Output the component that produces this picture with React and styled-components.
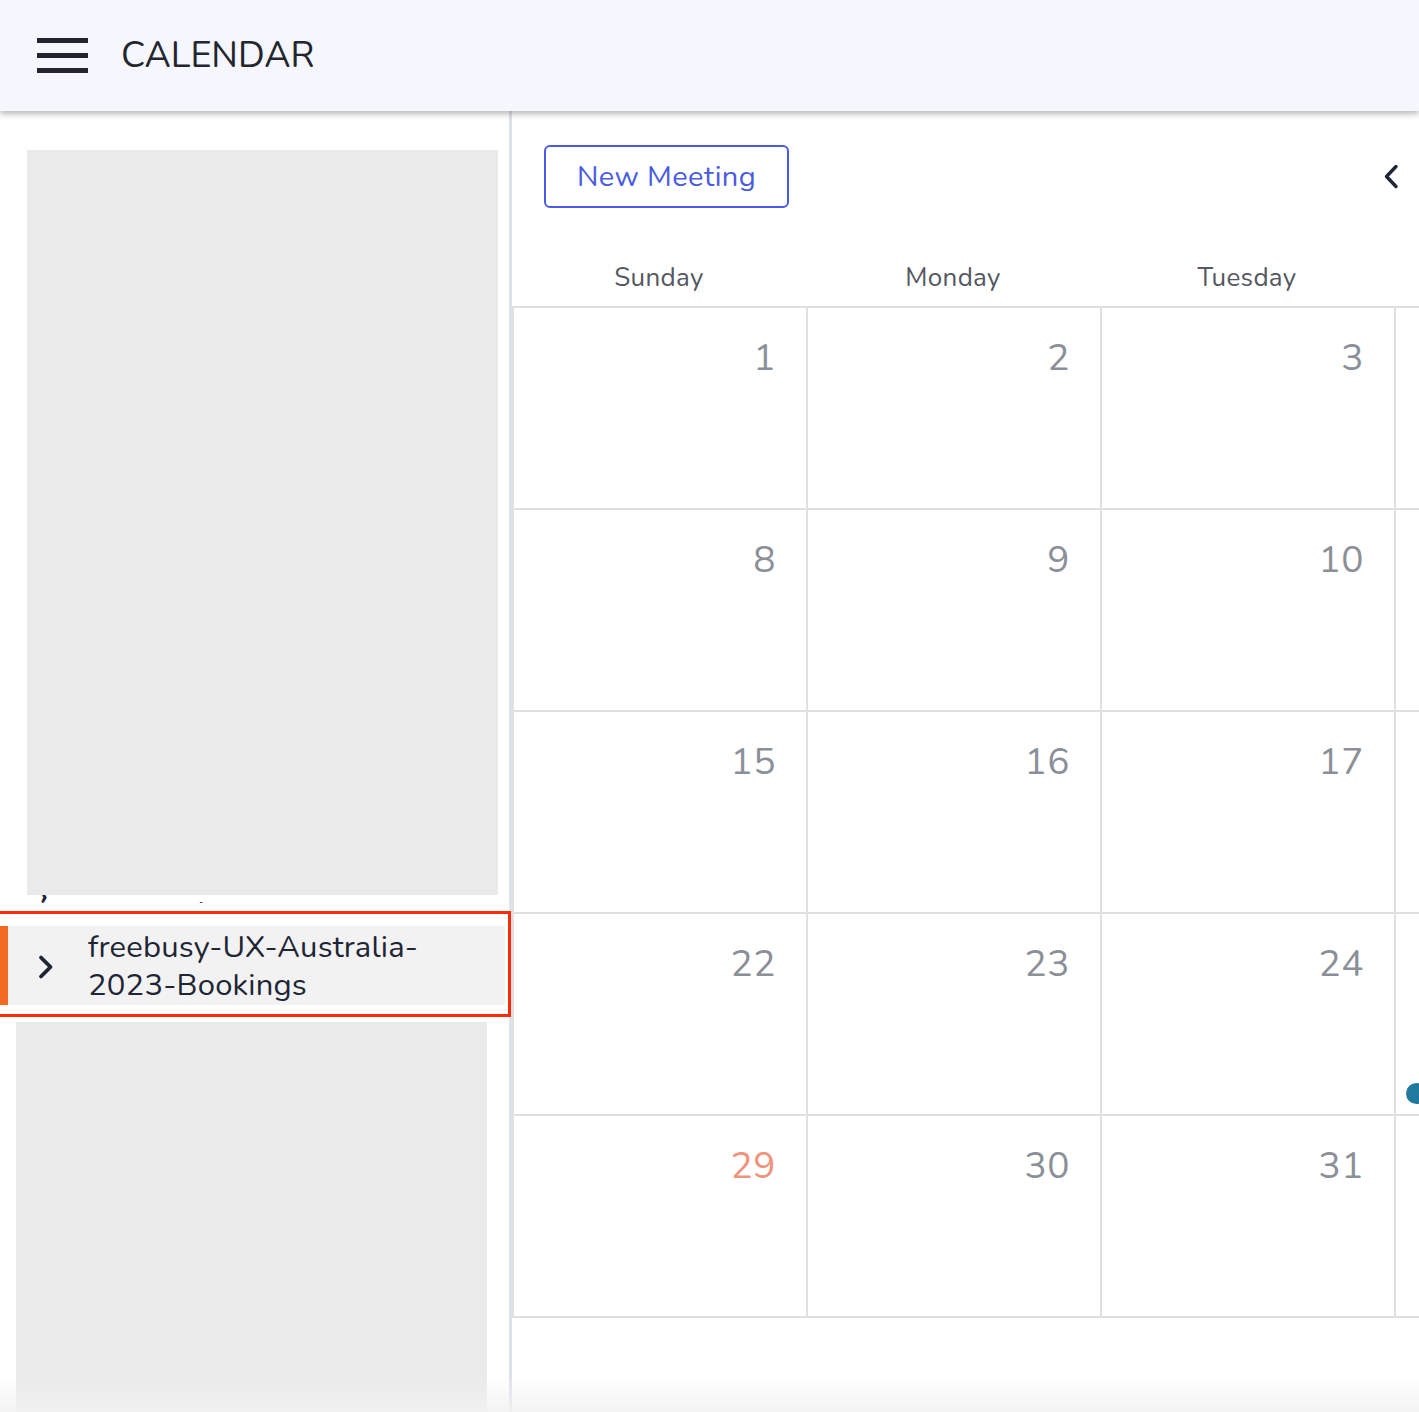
import styled, { createGlobalStyle } from "styled-components";

const GlobalStyle = createGlobalStyle`
  html, body {
    margin: 0;
    padding: 0;
    height: 100%;
    overflow: hidden;
    background: #ffffff;
    font-family: "Nunito", "Lato", "Noto Sans", sans-serif;
  }
  #root {
    height: 100%;
  }
`;

const weeks = [
  [1, 2, 3, 4, 5, 6, 7],
  [8, 9, 10, 11, 12, 13, 14],
  [15, 16, 17, 18, 19, 20, 21],
  [22, 23, 24, 25, 26, 27, 28],
  [29, 30, 31, "", "", "", ""],
];
const days = ["Sunday", "Monday", "Tuesday", "Wednesday", "Thursday", "Friday", "Saturday"];

const App = () => {
  return (
    <Page>
      <GlobalStyle />
      <Header>
        <Burger viewBox="0 0 51 36">
          <rect x="0" y="0" width="51" height="5" fill="#23262d" />
          <rect x="0" y="15" width="51" height="5" fill="#23262d" />
          <rect x="0" y="30" width="51" height="5" fill="#23262d" />
        </Burger>
        <Title>CALENDAR</Title>
      </Header>
      <Body>
        <Sidebar>
          <Redaction $inset={27} $height={745} />
          <PeekRow>
            <span>›</span>
            <span className="comma">,</span>
          </PeekRow>
          <Highlight>
            <GroupRow>
              <ActiveBar />
              <Chevron viewBox="0 0 18 26">
                <path d="M4 3.5 L13.5 13 L4 22.5" fill="none" stroke="#1e2535" strokeWidth="3.8" strokeLinecap="round" strokeLinejoin="round" />
              </Chevron>
              <GroupName>freebusy-UX-Australia-<br />2023-Bookings</GroupName>
            </GroupRow>
          </Highlight>
          <Redaction $inset={16} $grow />
        </Sidebar>
        <Main>
          <Toolbar>
            <NewButton>New Meeting</NewButton>
            <NavButton viewBox="0 0 17 26">
              <path d="M13 2.5 L3.5 12.5 L13 22.5" fill="none" stroke="#1e2535" strokeWidth="3.4" strokeLinecap="round" strokeLinejoin="round" />
            </NavButton>
          </Toolbar>
          <DayHeader>
            {days.map((d) => (
              <DayName key={d}>{d}</DayName>
            ))}
          </DayHeader>
          <Grid>
            {weeks.map((week, wi) =>
              week.map((n, di) => (
                <Cell key={wi + "-" + di}>
                  <DayNum $sunday={wi === 4 && di === 0}>{n}</DayNum>
                  {n === 25 && <EventDot />}
                </Cell>
              ))
            )}
          </Grid>
        </Main>
        <BottomFade />
      </Body>
    </Page>
  );
};

const Page = styled.div`
  display: flex;
  flex-direction: column;
  height: 100%;
`;

const Header = styled.header`
  height: 111px;
  flex: none;
  display: flex;
  align-items: center;
  gap: 33px;
  padding-left: 37px;
  background: #f5f6fe;
  box-shadow: 0 3px 6px rgba(0, 0, 0, 0.28);
  position: relative;
  z-index: 2;
`;

const Burger = styled.svg`
  width: 51px;
  height: 36px;
  margin-top: 1px;
`;

const Title = styled.h1`
  margin: 0;
  font-size: 36px;
  font-weight: 400;
  color: #23262d;
`;

const Body = styled.div`
  flex: 1;
  display: flex;
  min-height: 0;
  position: relative;
`;

const Sidebar = styled.aside`
  width: 512px;
  flex: none;
  display: flex;
  flex-direction: column;
  padding-top: 39px;
  border-right: 3px solid #dfe1ea;
  box-sizing: border-box;
  position: relative;
  z-index: 1;
`;

const Redaction = styled.div`
  margin-left: ${(p) => p.$inset}px;
  width: 471px;
  height: ${(p) => (p.$height ? p.$height + "px" : "auto")};
  flex: ${(p) => (p.$grow ? 1 : "none")};
  background: #eaeaea;
`;

const PeekRow = styled.div`
  height: 8px;
  overflow: hidden;
  display: flex;
  align-items: flex-end;
  padding-left: 40px;
  font-size: 28px;
  color: #1e2535;
  font-weight: 700;

  span {
    display: block;
    height: 8px;
    line-height: 2px;
  }
  .comma {
    margin-left: 150px;
    font-weight: 400;
  }
`;

const Highlight = styled.div`
  margin: 8px 0 5px -3px;
  width: 514px;
  padding: 12px 3px 9px 0;
  border: 3px solid #ff2a0a;
  box-sizing: border-box;
`;

const GroupRow = styled.div`
  display: flex;
  align-items: center;
  background: #f2f2f2;
  height: 79px;
`;

const ActiveBar = styled.div`
  width: 8px;
  align-self: stretch;
  background: #f26a21;
`;

const Chevron = styled.svg`
  width: 18px;
  height: 26px;
  margin-left: 29px;
  margin-top: 2px;
`;

const GroupName = styled.div`
  margin-left: 33px;
  font-size: 31px;
  line-height: 38px;
  color: #1e2535;
  letter-spacing: 0.2px;
`;

const Main = styled.main`
  flex: 1;
  min-width: 0;
  overflow: hidden;
  display: flex;
  flex-direction: column;
`;

const Toolbar = styled.div`
  display: flex;
  align-items: center;
  justify-content: space-between;
  padding: 34px 19px 0 32px;
`;

const NewButton = styled.button`
  height: 63px;
  width: 245px;
  border: 2px solid #4a5be3;
  border-radius: 6px;
  background: #ffffff;
  color: #4a5be3;
  font: inherit;
  font-size: 29px;
  letter-spacing: 0.4px;
  cursor: pointer;
`;

const NavButton = styled.svg`
  width: 17px;
  height: 26px;
`;

const DayHeader = styled.div`
  display: grid;
  grid-template-columns: repeat(7, 294px);
  height: 98px;
  align-items: center;
  padding-top: 41px;
  box-sizing: border-box;
`;

const DayName = styled.div`
  text-align: center;
  font-size: 26px;
  color: #555861;
  letter-spacing: 0.3px;
`;

const Grid = styled.div`
  display: grid;
  grid-template-columns: repeat(7, 294px);
  grid-auto-rows: 202px;
  border-top: 2px solid #e0e0e0;
  border-left: 2px solid #e0e0e0;
  width: max-content;
`;

const Cell = styled.div`
  border-right: 2px solid #e0e0e0;
  border-bottom: 2px solid #e0e0e0;
  position: relative;
  text-align: right;
  padding: 28px 30px 0 0;
`;

const DayNum = styled.div`
  font-size: 37px;
  line-height: 44px;
  color: ${(p) => (p.$sunday ? "#f0937c" : "#8b8f97")};
  letter-spacing: 0.5px;
`;

const EventDot = styled.span`
  position: absolute;
  left: 10px;
  top: 169px;
  width: 21px;
  height: 21px;
  border-radius: 50%;
  background: #1f7a9e;
`;

const BottomFade = styled.div`
  position: absolute;
  left: 0;
  right: 0;
  bottom: 0;
  height: 36px;
  background: linear-gradient(to bottom, rgba(245, 245, 245, 0), rgba(242, 242, 242, 0.9));
  pointer-events: none;
  z-index: 3;
`;

export default App;
